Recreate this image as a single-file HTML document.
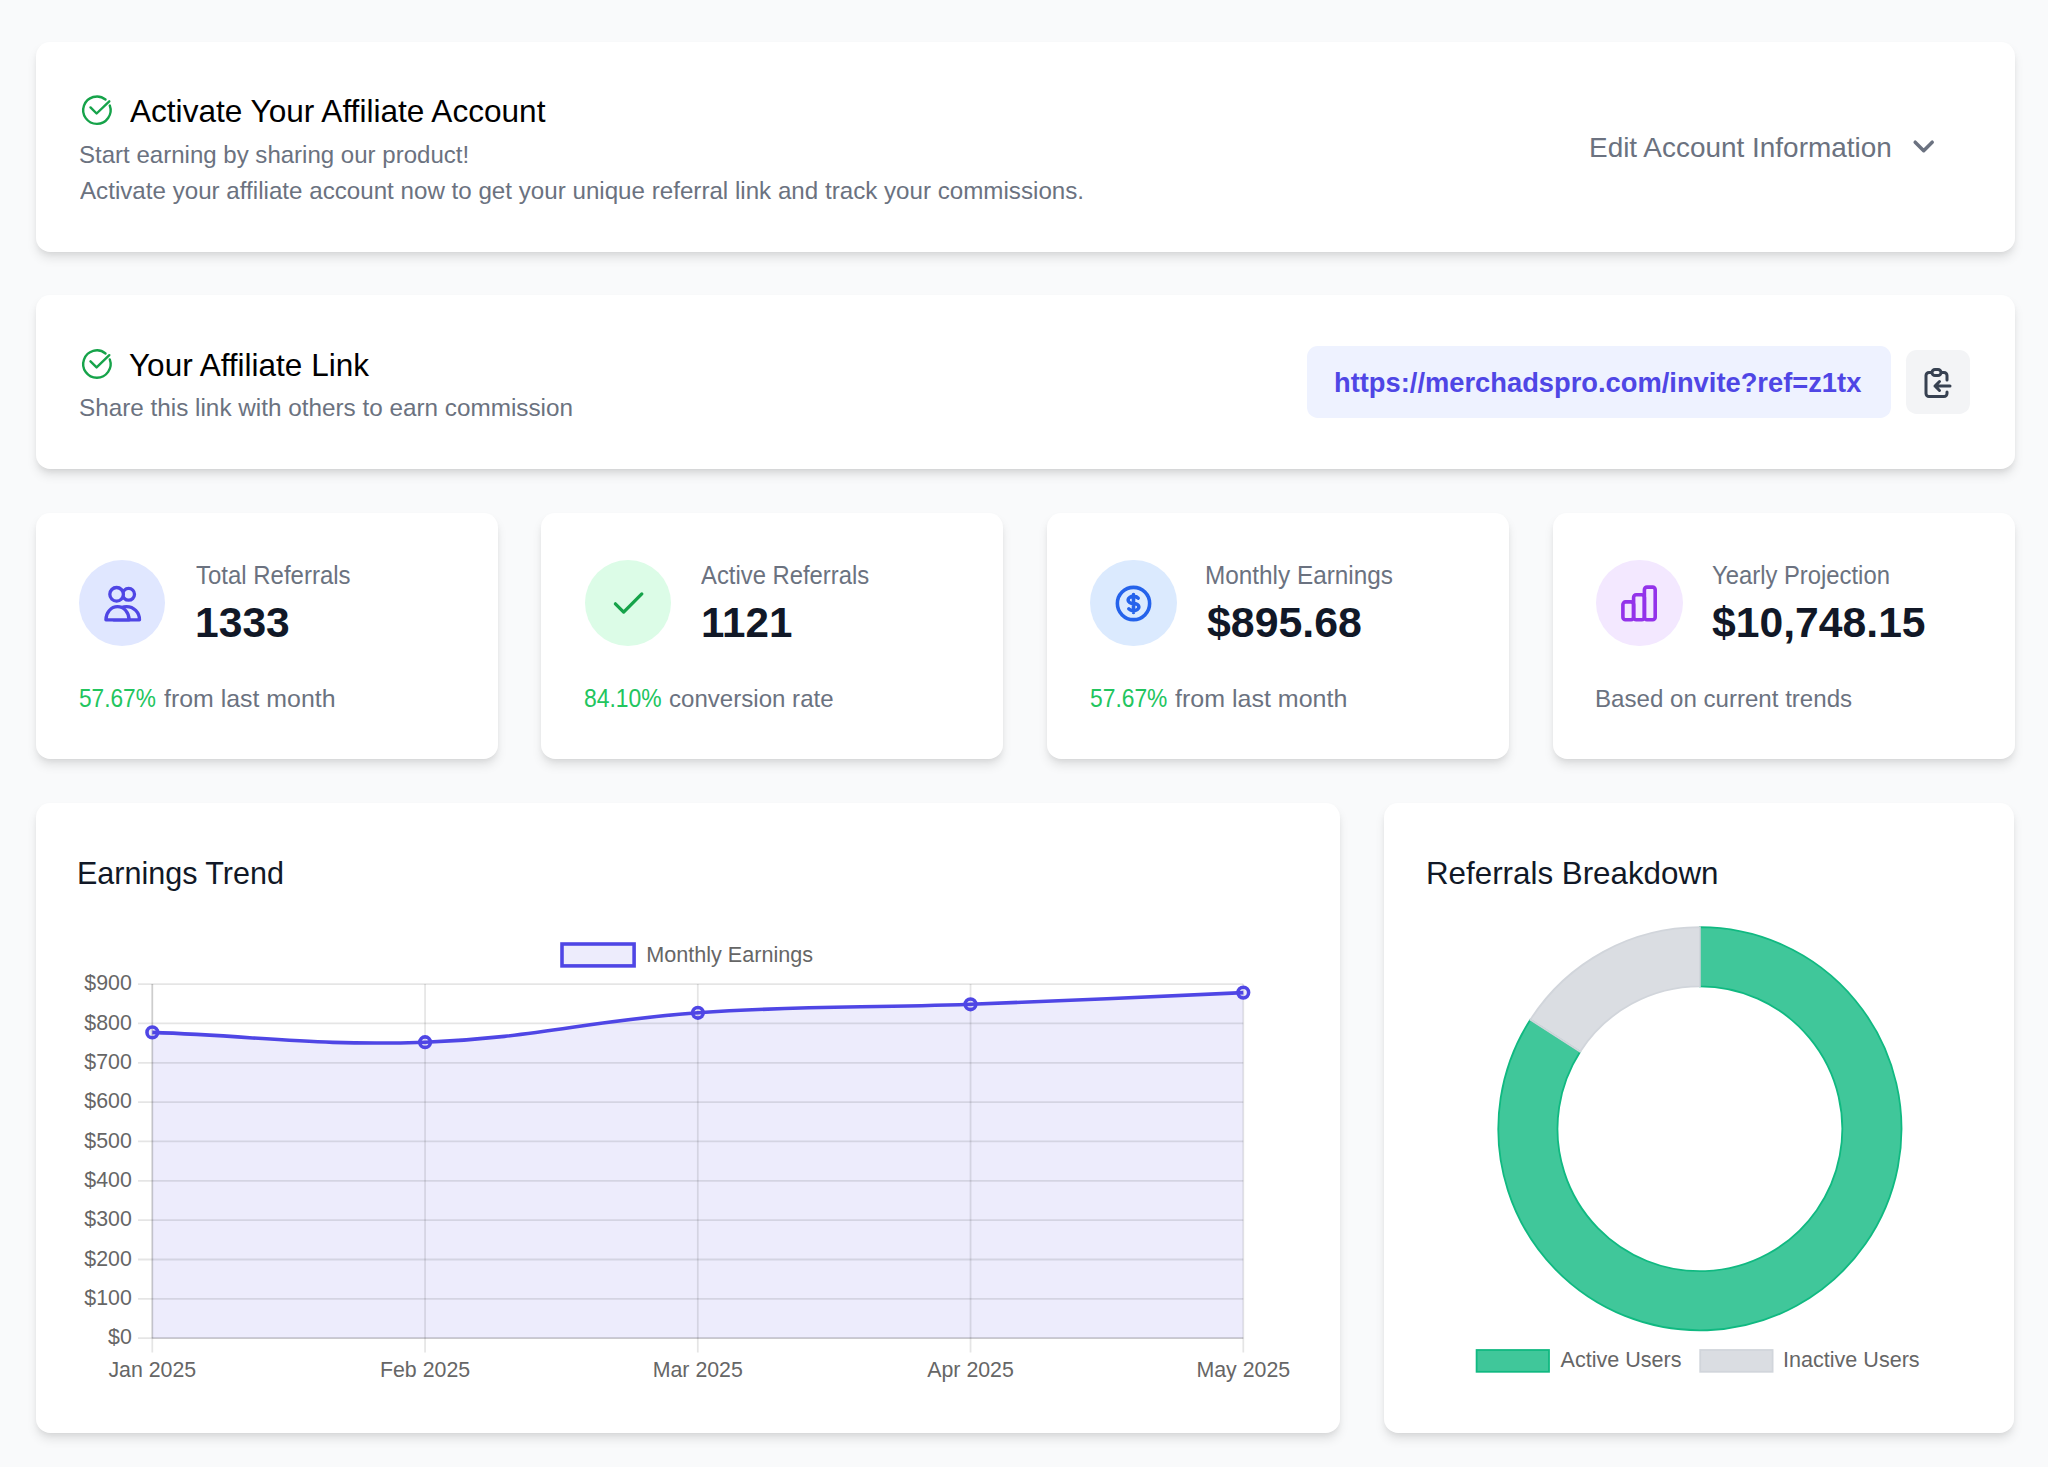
<!DOCTYPE html>
<html><head><meta charset="utf-8"><title>Affiliate Dashboard</title>
<style>
html,body{margin:0;padding:0;width:2048px;height:1467px;overflow:hidden;background:#f9fafb;font-family:"Liberation Sans",sans-serif;}
.card{position:absolute;background:#fff;border-radius:14.2px;box-shadow:0 7.1px 10.7px -1.8px rgba(0,0,0,0.1),0 3.6px 7.1px -3.6px rgba(0,0,0,0.1);}
.tx{position:absolute;white-space:nowrap;transform-origin:0 0;font-family:"Liberation Sans",sans-serif;}
.ic{position:absolute;overflow:visible;}
.box{position:absolute;}
svg.chart{position:absolute;left:0;top:0;}
svg.chart text{font-family:"Liberation Sans",sans-serif;font-size:21.33px;fill:#666;}
</style></head><body>
<div class="card" style="left:35.5px;top:41.5px;width:1979.0px;height:210.5px"></div><div class="card" style="left:35.5px;top:295px;width:1979.0px;height:174.39999999999998px"></div><div class="card" style="left:35.5px;top:513px;width:462.0px;height:245.75px"></div><div class="card" style="left:541px;top:513px;width:462px;height:245.75px"></div><div class="card" style="left:1046.5px;top:513px;width:462.0px;height:245.75px"></div><div class="card" style="left:1552.5px;top:513px;width:462.0px;height:245.75px"></div><div class="card" style="left:35.5px;top:803.3px;width:1304.8px;height:630.2px"></div><div class="card" style="left:1383.8px;top:803.3px;width:630.7px;height:630.2px"></div>
<svg class="ic" style="left:0;top:0" width="200" height="500"><g fill="none" stroke="#16a34a" stroke-width="2.4" stroke-linecap="round" stroke-linejoin="round"><path d="M109.77 105.51 A13.7 13.7 0 1 1 105.52 99.55"/><polyline points="90.50,107.40 96.60,113.50 109.30,101.30"/></g></svg><svg class="ic" style="left:0;top:0" width="200" height="500"><g fill="none" stroke="#16a34a" stroke-width="2.4" stroke-linecap="round" stroke-linejoin="round"><path d="M109.77 359.41 A13.7 13.7 0 1 1 105.52 353.45"/><polyline points="90.50,361.30 96.60,367.40 109.30,355.20"/></g></svg><svg class="ic" style="left:0;top:0" width="2048" height="400"><polyline points="1915.2,142.2 1923.7,150.7 1932.2,142.2" fill="none" stroke="#6b7280" stroke-width="3.5" stroke-linecap="round" stroke-linejoin="round"/></svg><div class="box" style="left:1306.5px;top:346.2px;width:584.5px;height:71.9px;background:#eef2ff;border-radius:10.7px"></div><div class="box" style="left:1906px;top:350px;width:64px;height:64.4px;background:#f3f4f6;border-radius:10.7px"></div><svg class="ic" style="left:1920px;top:364.5px" width="36" height="36" viewBox="0 0 24 24" fill="none" stroke="#374151" stroke-width="2" stroke-linecap="round" stroke-linejoin="round"><path d="M8 5H6a2 2 0 00-2 2v12a2 2 0 002 2h10a2 2 0 002-2v-1M8 5a2 2 0 002 2h2a2 2 0 002-2M8 5a2 2 0 012-2h2a2 2 0 012 2m0 0h2a2 2 0 012 2v3m2 4H10m0 0l3-3m-3 3l3 3"/></svg><div class="box" style="left:79.10px;top:560.00px;width:86.4px;height:86.4px;border-radius:50%;background:#e0e7ff"></div><div class="box" style="left:584.80px;top:560.00px;width:86.4px;height:86.4px;border-radius:50%;background:#dcfce7"></div><div class="box" style="left:1090.40px;top:560.00px;width:86.4px;height:86.4px;border-radius:50%;background:#dbeafe"></div><div class="box" style="left:1596.40px;top:560.00px;width:86.4px;height:86.4px;border-radius:50%;background:#f3e8ff"></div><svg class="ic" style="left:0;top:0" width="300" height="700"><g fill="none" stroke="#4f46e5" stroke-width="3.3" stroke-linejoin="round">
<circle cx="128.6" cy="594.3" r="5.9"/>
<path d="M113.7 619.8 A12.9 13.2 0 0 1 139.5 619.8 Z"/>
<circle cx="116.6" cy="594.3" r="6.8" fill="#e0e7ff"/>
<path d="M105.9 619.8 A11.6 13.2 0 0 1 129.1 619.8 Z" fill="#e0e7ff"/>
</g></svg><svg class="ic" style="left:0;top:0" width="800" height="700"><polyline points="615.4,603.8 623.65,612.05 641.8,593.9" fill="none" stroke="#16a34a" stroke-width="3.3" stroke-linecap="round" stroke-linejoin="round"/></svg><svg class="ic" style="left:1112.3px;top:581.8px" width="43" height="43" viewBox="0 0 24 24" fill="none" stroke="#2563eb" stroke-width="2" stroke-linecap="round" stroke-linejoin="round"><path d="M12 8c-1.657 0-3 .895-3 2s1.343 2 3 2 3 .895 3 2-1.343 2-3 2m0-8c1.11 0 2.08.402 2.599 1M12 8V7m0 1v8m0 0v1m0-1c-1.11 0-2.08-.402-2.599-1M21 12a9 9 0 11-18 0 9 9 0 0118 0z"/></svg><svg class="ic" style="left:0;top:0" width="1700" height="700"><g fill="none" stroke="#9333ea" stroke-width="3.6" stroke-linejoin="round"><rect x="1622.9" y="601.9" width="10.7" height="17.9" rx="2.6"/><rect x="1633.6" y="594.8" width="10.8" height="25" rx="2.6"/><rect x="1644.4" y="587.1" width="10.8" height="32.7" rx="2.6"/></g></svg>
<svg class="chart" width="2048" height="1467"><path d="M152.30 1032.40 C261.42 1036.32 316.26 1046.11 425.10 1042.20 C534.50 1038.27 588.49 1020.40 697.90 1012.80 C806.65 1005.24 861.48 1008.34 970.50 1004.30 C1079.64 1000.26 1134.18 997.28 1243.30 992.60 L1243.3 1338.2 L152.3 1338.2 Z" fill="rgba(79,70,229,0.1)"/><line x1="138" y1="1338.20" x2="1243.3" y2="1338.20" stroke="rgba(0,0,0,0.1)" stroke-width="1.78"/><text x="131.8" y="1344.30" text-anchor="end">$0</text><line x1="138" y1="1298.86" x2="1243.3" y2="1298.86" stroke="rgba(0,0,0,0.1)" stroke-width="1.78"/><text x="131.8" y="1304.96" text-anchor="end">$100</text><line x1="138" y1="1259.51" x2="1243.3" y2="1259.51" stroke="rgba(0,0,0,0.1)" stroke-width="1.78"/><text x="131.8" y="1265.61" text-anchor="end">$200</text><line x1="138" y1="1220.17" x2="1243.3" y2="1220.17" stroke="rgba(0,0,0,0.1)" stroke-width="1.78"/><text x="131.8" y="1226.27" text-anchor="end">$300</text><line x1="138" y1="1180.82" x2="1243.3" y2="1180.82" stroke="rgba(0,0,0,0.1)" stroke-width="1.78"/><text x="131.8" y="1186.92" text-anchor="end">$400</text><line x1="138" y1="1141.48" x2="1243.3" y2="1141.48" stroke="rgba(0,0,0,0.1)" stroke-width="1.78"/><text x="131.8" y="1147.58" text-anchor="end">$500</text><line x1="138" y1="1102.13" x2="1243.3" y2="1102.13" stroke="rgba(0,0,0,0.1)" stroke-width="1.78"/><text x="131.8" y="1108.23" text-anchor="end">$600</text><line x1="138" y1="1062.79" x2="1243.3" y2="1062.79" stroke="rgba(0,0,0,0.1)" stroke-width="1.78"/><text x="131.8" y="1068.89" text-anchor="end">$700</text><line x1="138" y1="1023.44" x2="1243.3" y2="1023.44" stroke="rgba(0,0,0,0.1)" stroke-width="1.78"/><text x="131.8" y="1029.54" text-anchor="end">$800</text><line x1="138" y1="984.10" x2="1243.3" y2="984.10" stroke="rgba(0,0,0,0.1)" stroke-width="1.78"/><text x="131.8" y="990.20" text-anchor="end">$900</text><line x1="152.30" y1="984.1" x2="152.30" y2="1352.4" stroke="rgba(0,0,0,0.1)" stroke-width="1.78"/><text x="152.30" y="1377.3" text-anchor="middle">Jan 2025</text><line x1="425.05" y1="984.1" x2="425.05" y2="1352.4" stroke="rgba(0,0,0,0.1)" stroke-width="1.78"/><text x="425.05" y="1377.3" text-anchor="middle">Feb 2025</text><line x1="697.80" y1="984.1" x2="697.80" y2="1352.4" stroke="rgba(0,0,0,0.1)" stroke-width="1.78"/><text x="697.80" y="1377.3" text-anchor="middle">Mar 2025</text><line x1="970.55" y1="984.1" x2="970.55" y2="1352.4" stroke="rgba(0,0,0,0.1)" stroke-width="1.78"/><text x="970.55" y="1377.3" text-anchor="middle">Apr 2025</text><line x1="1243.30" y1="984.1" x2="1243.30" y2="1352.4" stroke="rgba(0,0,0,0.1)" stroke-width="1.78"/><text x="1243.30" y="1377.3" text-anchor="middle">May 2025</text><line x1="152.3" y1="984.1" x2="152.3" y2="1338.2" stroke="rgba(0,0,0,0.1)" stroke-width="1.78"/><line x1="152.3" y1="1338.2" x2="1243.3" y2="1338.2" stroke="rgba(0,0,0,0.1)" stroke-width="1.78"/><path d="M152.30 1032.40 C261.42 1036.32 316.26 1046.11 425.10 1042.20 C534.50 1038.27 588.49 1020.40 697.90 1012.80 C806.65 1005.24 861.48 1008.34 970.50 1004.30 C1079.64 1000.26 1134.18 997.28 1243.30 992.60" fill="none" stroke="#4f46e5" stroke-width="3.56"/><circle cx="152.3" cy="1032.4" r="5.33" fill="rgba(79,70,229,0.1)" stroke="#4f46e5" stroke-width="3.56"/><circle cx="425.1" cy="1042.2" r="5.33" fill="rgba(79,70,229,0.1)" stroke="#4f46e5" stroke-width="3.56"/><circle cx="697.9" cy="1012.8" r="5.33" fill="rgba(79,70,229,0.1)" stroke="#4f46e5" stroke-width="3.56"/><circle cx="970.5" cy="1004.3" r="5.33" fill="rgba(79,70,229,0.1)" stroke="#4f46e5" stroke-width="3.56"/><circle cx="1243.3" cy="992.6" r="5.33" fill="rgba(79,70,229,0.1)" stroke="#4f46e5" stroke-width="3.56"/><rect x="562" y="944" width="72.1" height="21.9" fill="rgba(79,70,229,0.1)" stroke="#4f46e5" stroke-width="3.56"/><text x="646.2" y="961.7" style="font-size:21.6px">Monthly Earnings</text><path d="M1699.90 927.20 A201.6 201.6 0 1 1 1530.34 1019.75 L1580.13 1051.77 A142.4 142.4 0 1 0 1699.90 986.40 Z" fill="rgba(16,185,129,0.8)" stroke="#10b981" stroke-width="1.78"/><path d="M1530.34 1019.75 A201.6 201.6 0 0 1 1699.90 927.20 L1699.90 986.40 A142.4 142.4 0 0 0 1580.13 1051.77 Z" fill="rgba(209,213,219,0.8)" stroke="#d1d5db" stroke-width="1.78"/><rect x="1476.6" y="1350.0" width="72.4" height="21.8" fill="rgba(16,185,129,0.8)" stroke="#10b981" stroke-width="1.78"/><text x="1560.6" y="1367.3" style="font-size:21.55px">Active Users</text><rect x="1700.2" y="1350.0" width="72.4" height="21.8" fill="rgba(209,213,219,0.8)" stroke="#d1d5db" stroke-width="1.78"/><text x="1783.1" y="1367.3" style="font-size:21.55px">Inactive Users</text></svg>
<div class="tx" style="left:130.25px;top:96.10px;font-size:31.5px;line-height:31.5px;font-weight:400;color:#000;transform:scaleX(1.0024);">Activate Your Affiliate Account</div><div class="tx" style="left:79.02px;top:142.90px;font-size:24.6px;line-height:24.6px;font-weight:400;color:#6b7280;transform:scaleX(0.9773);">Start earning by sharing our product!</div><div class="tx" style="left:80.00px;top:179.30px;font-size:24.6px;line-height:24.6px;font-weight:400;color:#6b7280;transform:scaleX(0.9824);">Activate your affiliate account now to get your unique referral link and track your commissions.</div><div class="tx" style="left:1588.56px;top:133.50px;font-size:27.4px;line-height:27.4px;font-weight:400;color:#6b7280;transform:scaleX(1.0198);">Edit Account Information</div><div class="tx" style="left:129.00px;top:350.00px;font-size:31.5px;line-height:31.5px;font-weight:400;color:#000;transform:scaleX(1.0000);">Your Affiliate Link</div><div class="tx" style="left:78.76px;top:396.25px;font-size:24.6px;line-height:24.6px;font-weight:400;color:#6b7280;transform:scaleX(0.9874);">Share this link with others to earn commission</div><div class="tx" style="left:1334.01px;top:368.70px;font-size:27.4px;line-height:27.4px;font-weight:700;color:#4f46e5;transform:scaleX(0.9970);">https://merchadspro.com/invite?ref=z1tx</div><div class="tx" style="left:195.60px;top:562.50px;font-size:25.1px;line-height:25.1px;font-weight:400;color:#6b7280;transform:scaleX(0.9553);">Total Referrals</div><div class="tx" style="left:195.45px;top:601.90px;font-size:41.9px;line-height:41.9px;font-weight:700;color:#111827;transform:scaleX(1.0169);">1333</div><div class="tx" style="left:79.11px;top:685.90px;font-size:25.4px;line-height:25.4px;font-weight:400;color:#22c55e;transform:scaleX(0.8929);">57.67%</div><div class="tx" style="left:164.40px;top:686.90px;font-size:24.6px;line-height:24.6px;font-weight:400;color:#6b7280;transform:scaleX(1.0119);">from last month</div><div class="tx" style="left:701.25px;top:562.50px;font-size:25.1px;line-height:25.1px;font-weight:400;color:#6b7280;transform:scaleX(0.9497);">Active Referrals</div><div class="tx" style="left:701.38px;top:601.90px;font-size:41.9px;line-height:41.9px;font-weight:700;color:#111827;transform:scaleX(1.0057);">1121</div><div class="tx" style="left:583.90px;top:685.90px;font-size:25.4px;line-height:25.4px;font-weight:400;color:#22c55e;transform:scaleX(0.9024);">84.10%</div><div class="tx" style="left:669.02px;top:686.90px;font-size:24.6px;line-height:24.6px;font-weight:400;color:#6b7280;transform:scaleX(0.9789);">conversion rate</div><div class="tx" style="left:1205.31px;top:562.50px;font-size:25.1px;line-height:25.1px;font-weight:400;color:#6b7280;transform:scaleX(0.9694);">Monthly Earnings</div><div class="tx" style="left:1206.98px;top:601.90px;font-size:41.9px;line-height:41.9px;font-weight:700;color:#111827;transform:scaleX(1.0228);">$895.68</div><div class="tx" style="left:1089.90px;top:685.90px;font-size:25.4px;line-height:25.4px;font-weight:400;color:#22c55e;transform:scaleX(0.8988);">57.67%</div><div class="tx" style="left:1175.20px;top:686.90px;font-size:24.6px;line-height:24.6px;font-weight:400;color:#6b7280;transform:scaleX(1.0167);">from last month</div><div class="tx" style="left:1711.80px;top:562.50px;font-size:25.1px;line-height:25.1px;font-weight:400;color:#6b7280;transform:scaleX(0.9495);">Yearly Projection</div><div class="tx" style="left:1712.08px;top:601.90px;font-size:41.9px;line-height:41.9px;font-weight:700;color:#111827;transform:scaleX(1.0188);">$10,748.15</div><div class="tx" style="left:1595.29px;top:686.90px;font-size:24.6px;line-height:24.6px;font-weight:400;color:#6b7280;transform:scaleX(0.9794);">Based on current trends</div><div class="tx" style="left:77.42px;top:857.75px;font-size:31.8px;line-height:31.8px;font-weight:400;color:#111827;transform:scaleX(0.9597);">Earnings Trend</div><div class="tx" style="left:1426.05px;top:857.70px;font-size:31.8px;line-height:31.8px;font-weight:400;color:#111827;transform:scaleX(0.9849);">Referrals Breakdown</div>
</body></html>
